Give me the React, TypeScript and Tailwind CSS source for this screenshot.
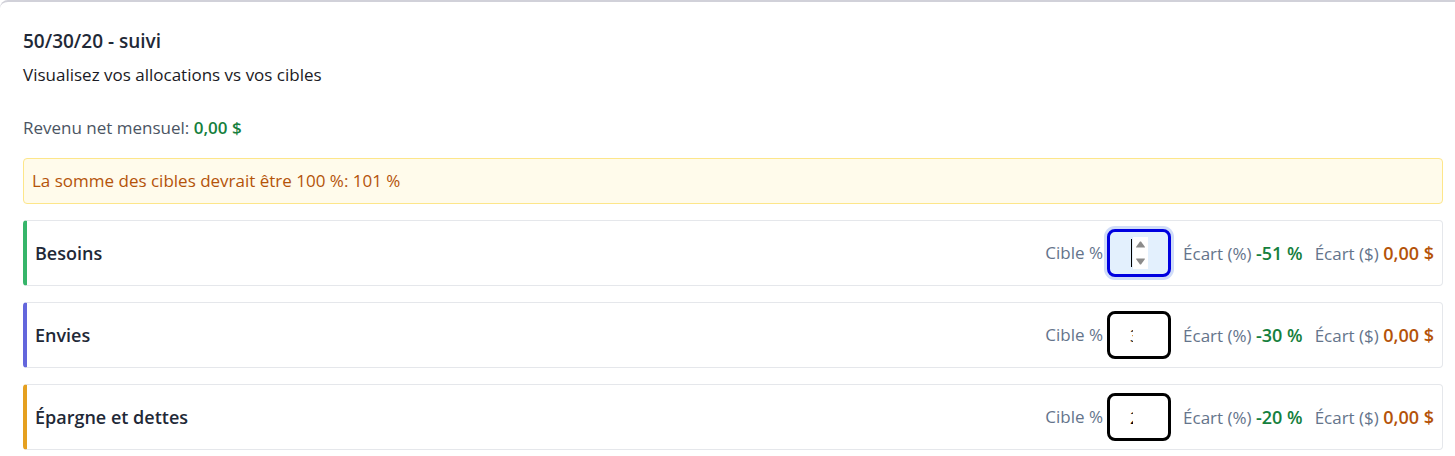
import { useState } from "react";

type Bucket = {
  id: string;
  name: string;
  target: number;
  gap: string;
  amount: string;
  accent: string;
  active?: boolean;
};

const buckets: Bucket[] = [
  { id: "besoins", name: "Besoins", target: 51, gap: "-51 %", amount: "0,00 $", accent: "border-l-[#36b56a]", active: true },
  { id: "envies", name: "Envies", target: 30, gap: "-30 %", amount: "0,00 $", accent: "border-l-[#6366dc]" },
  { id: "epargne", name: "Épargne et dettes", target: 20, gap: "-20 %", amount: "0,00 $", accent: "border-l-[#e5a020]" },
];

const inputBase =
  "block h-12 w-16 rounded-lg border-3 px-5 text-[17px] leading-7 outline-none";
const inputIdle = "border-black bg-white text-black";
const inputActive =
  "border-[#0000e0] bg-[#e3f0fd] text-transparent caret-transparent ring-3 ring-[#d0dcf8]";

function Stepper({ onStep }: { onStep: (delta: number) => void }) {
  return (
    <>
      <span className="absolute top-2.5 left-6 h-7 w-px bg-black" />
      <div className="absolute top-2 left-[26px] flex h-8 w-[15px] flex-col justify-between bg-white py-1">
        <button type="button" aria-label="Augmenter" className="flex justify-center" onClick={() => onStep(1)}>
          <svg width="9" height="7" viewBox="0 0 9 7" fill="#8b8b8b">
            <path d="M4 .5h1l4 5.500q0 .5-.5.5h-8q-.5 0-.5-.5z" />
          </svg>
        </button>
        <button type="button" aria-label="Diminuer" className="flex justify-center" onClick={() => onStep(-1)}>
          <svg width="9" height="7" viewBox="0 0 9 7" fill="#8b8b8b">
            <path d="M4 6.500h1l4-5.500q0-.5-.5-.5h-8q-.5 0-.5.5z" />
          </svg>
        </button>
      </div>
    </>
  );
}

function BucketRow({ bucket }: { bucket: Bucket }) {
  const [target, setTarget] = useState(String(bucket.target));
  return (
    <li
      className={`flex items-center justify-between rounded border border-l-4 border-[#e5e7eb] p-2 ${bucket.accent}`}
    >
      <h3 className="text-[18px] font-semibold text-[#1f2937]">{bucket.name}</h3>
      <div className="flex items-center gap-3 text-[#64748b]">
        <div className="flex items-center gap-1">
          <label htmlFor={bucket.id}>Cible %</label>
          <div className="relative">
            <input
              id={bucket.id}
              type="number"
              value={target}
              onChange={(event) => setTarget(event.target.value)}
              className={`${inputBase} ${bucket.active ? inputActive : inputIdle}`}
            />
            {bucket.active && <Stepper onStep={(delta) => setTarget(String(Number(target) + delta))} />}
          </div>
        </div>
        <p>
          Écart (%) <strong className="text-[18px] font-semibold text-[#15803d]">{bucket.gap}</strong>
        </p>
        <p>
          Écart ($) <strong className="text-[18px] font-semibold text-[#b45309]">{bucket.amount}</strong>
        </p>
      </div>
    </li>
  );
}

export default function App() {
  return (
    <section className="rounded-tl-lg border-t-2 border-[#d1d1d9] bg-white pt-[25px] pr-3 pb-1.5 pl-[23px] font-['Open_Sans','Noto_Sans',sans-serif] text-[17px] leading-7">
      <h2 className="text-[19px] font-semibold text-[#1f2937]">50/30/20 - suivi</h2>
      <p className="mt-1.5 text-[#1a1a24]">Visualisez vos allocations vs vos cibles</p>
      <p className="mt-[25px] text-[#4b5563]">
        Revenu net mensuel: <strong className="font-semibold text-[#15803d]">0,00 $</strong>
      </p>
      <p role="alert" className="mt-4 rounded border border-[#fde68a] bg-[#fffbeb] p-2 text-[#b45309]">
        La somme des cibles devrait être 100 %: 101 %
      </p>
      <ul className="mt-4 flex flex-col gap-4">
        {buckets.map((bucket) => (
          <BucketRow key={bucket.id} bucket={bucket} />
        ))}
      </ul>
    </section>
  );
}
